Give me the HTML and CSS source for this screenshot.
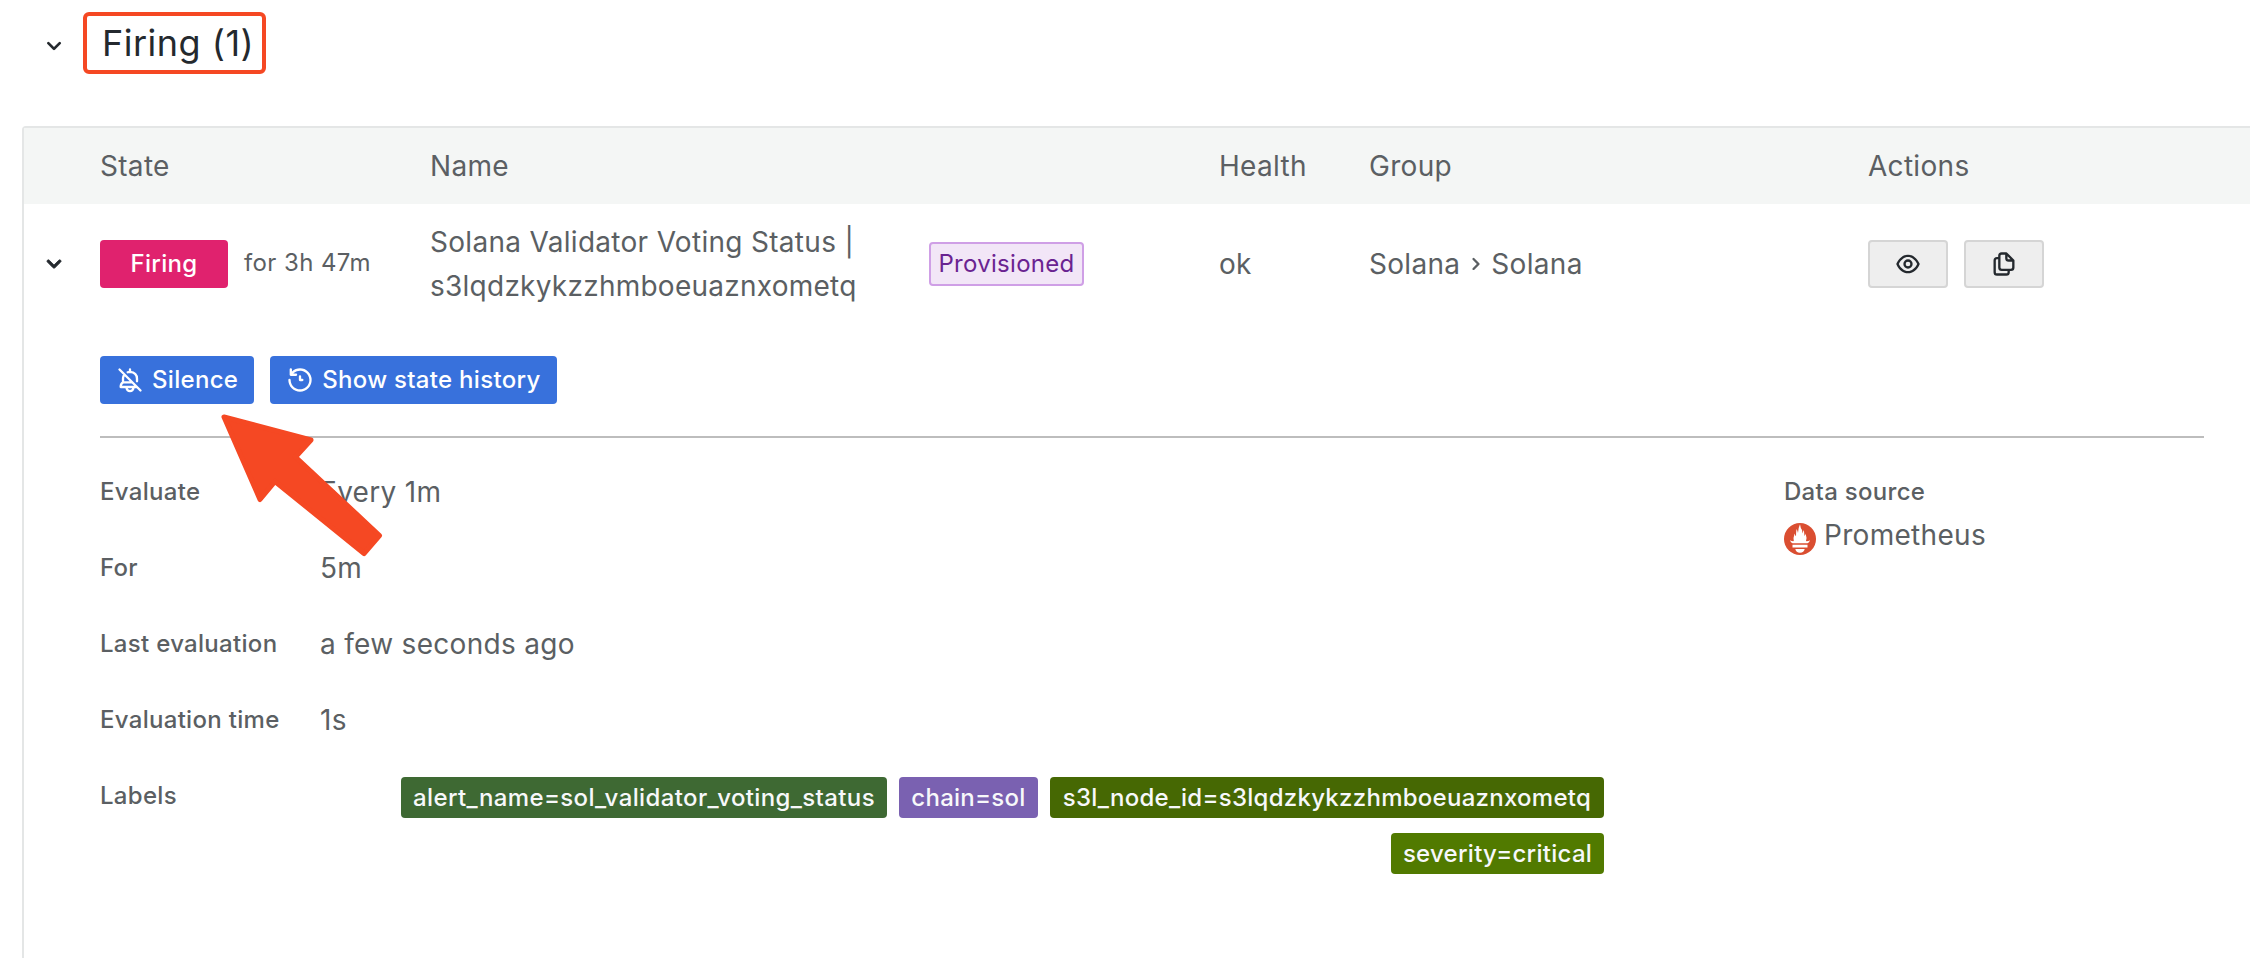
FILE: index.html
```html
<!DOCTYPE html>
<html lang="en">
<head>
<meta charset="utf-8">
<title>Alert rules</title>
<link rel="stylesheet" href="styles.css">
</head>
<body>
<svg class="sprite" width="0" height="0">
  <symbol id="angle-down" viewBox="0 0 24 24"><path d="M17,9.17a1,1,0,0,0-1.41,0L12,12.71,8.46,9.17a1,1,0,0,0-1.41,0,1,1,0,0,0,0,1.42l4.24,4.24a1,1,0,0,0,1.42,0L17,10.59A1,1,0,0,0,17,9.17Z"/></symbol>
</svg>
<header class="section-header">
  <svg class="icon toggle"><use href="#angle-down"/></svg>
  <h4 class="section-title">Firing (1)</h4>
</header>

<main class="table">
  <div class="grid head">
    <span></span><span>State</span><span>Name</span><span></span><span>Health</span><span>Group</span><span>Actions</span>
  </div>
  <div class="grid row">
    <svg class="icon row-toggle"><use href="#angle-down"/></svg>
    <div class="state"><span class="state-tag">Firing</span><span class="small">for 3h 47m</span></div>
    <div><span>Solana Validator Voting Status |</span><br><span class="name-id">s3lqdzkykzzhmboeuaznxometq</span></div>
    <div class="cell"><span class="provisioned">Provisioned</span></div>
    <div>ok</div>
    <div class="group">Solana<svg class="icon sep" viewBox="0 0 24 24"><path d="M14.83,11.29,10.59,7.05a1,1,0,0,0-1.42,0,1,1,0,0,0,0,1.41L12.71,12,9.17,15.54a1,1,0,0,0,0,1.41,1,1,0,0,0,.71.29,1,1,0,0,0,.71-.29l4.24-4.24A1,1,0,0,0,14.83,11.29Z"/></svg>Solana</div>
    <div class="actions">
      <button class="icon-button" aria-label="View"><svg class="icon" viewBox="0 0 24 24"><path d="M21.92,11.6C19.9,6.91,16.1,4,12,4S4.1,6.91,2.08,11.6a1,1,0,0,0,0,.8C4.1,17.09,7.9,20,12,20s7.9-2.91,9.92-7.6A1,1,0,0,0,21.92,11.6ZM12,18c-3.17,0-6.17-2.29-7.9-6C5.83,8.29,8.83,6,12,6s6.17,2.29,7.9,6C18.17,15.71,15.17,18,12,18ZM12,8a4,4,0,1,0,4,4A4,4,0,0,0,12,8Zm0,6a2,2,0,1,1,2-2A2,2,0,0,1,12,14Z"/></svg></button>
      <button class="icon-button" aria-label="Copy"><svg class="icon" viewBox="0 0 24 24"><path d="M21,8.94a1.31,1.31,0,0,0-.06-.27l0-.09a1.07,1.07,0,0,0-.19-.28h0l-6-6h0a1.07,1.07,0,0,0-.28-.19.32.32,0,0,0-.09,0A.88.88,0,0,0,14.05,2H10A3,3,0,0,0,7,5V6H6A3,3,0,0,0,3,9V19a3,3,0,0,0,3,3h8a3,3,0,0,0,3-3V18h1a3,3,0,0,0,3-3V9S21,9,21,8.94ZM15,5.41,17.59,8H16a1,1,0,0,1-1-1ZM15,19a1,1,0,0,1-1,1H6a1,1,0,0,1-1-1V9A1,1,0,0,1,6,8H7v7a3,3,0,0,0,3,3h5Zm4-4a1,1,0,0,1-1,1H10a1,1,0,0,1-1-1V5a1,1,0,0,1,1-1h3V7a3,3,0,0,0,3,3h3Z"/></svg></button>
    </div>
  </div>

  <section class="expanded">
    <div class="toolbar">
      <button class="button"><svg class="icon" viewBox="0 0 24 24"><g fill="none" stroke="currentColor" stroke-width="2" stroke-linecap="round" stroke-linejoin="round"><path d="M3 3l18 18M6.500 8.500Q6 9.800 6 11v3Q4 15 4 18H17.500M6 14h7.500M9 18.500a3 3 0 0 0 6 0M12 3v2Q18 5.500 18 11v2M10 5.400Q10.900 5 12 5"/></g></svg>Silence</button>
      <button class="button"><svg class="icon" viewBox="0 0 24 24"><path d="M12,2A10,10,0,0,0,5.12,4.77V3a1,1,0,0,0-2,0V7.5a1,1,0,0,0,1,1H8.62a1,1,0,0,0,0-2H6.22A8,8,0,1,1,4,12a1,1,0,0,0-2,0A10,10,0,1,0,12,2Zm0,6a1,1,0,0,0-1,1v3a1,1,0,0,0,1,1h2a1,1,0,0,0,0-2H13V9A1,1,0,0,0,12,8Z"/></svg>Show state history</button>
    </div>
    <div class="details">
      <dl class="fields">
        <dt>Evaluate</dt><dd>Every 1m</dd>
        <dt>For</dt><dd>5m</dd>
        <dt>Last evaluation</dt><dd>a few seconds ago</dd>
        <dt>Evaluation time</dt><dd>1s</dd>
        <dt>Labels</dt>
        <dd class="tags">
          <span class="tag green">alert_name=sol_validator_voting_status</span>
          <span class="tag purple">chain=sol</span>
          <span class="tag olive">s3l_node_id=s3lqdzkykzzhmboeuaznxometq</span>
          <span class="tag lime">severity=critical</span>
        </dd>
      </dl>
      <dl class="source">
        <dt>Data source</dt>
        <dd><svg class="prometheus" viewBox="0 0 32 32"><circle cx="16" cy="16" r="16" fill="#da4e31"/><path fill="#fff" d="M6 17.300q2 1 3.800.8Q9 15 10.600 10.500q.5 2 1.400 2.700Q12 9 12.500 6q1 1.500 1.500 4 .3-5.500 2-8.800.5 4 2 5.800.4 2 .4 3.500.8-2.500 1.500-3.500.3 3 .6 6 1-1.500 1.100-2.600Q23.200 15 22 18.100q2 .2 4-.8-.7 2.300-2.500 3h-15Q6.700 19.600 6 17.300ZM8.500 21.700h15v2.800h-15ZM11.300 26h9.400q-.7 3.700-4.700 3.700T11.300 26Z"/></svg>Prometheus</dd>
      </dl>
    </div>
    <svg class="arrow" viewBox="0 0 170 150"><path d="M6 8L93 31 77.500 48 161.500 126.500 146 144.500 57 72.500 42 90.500Z" fill="#f54823" stroke="#f54823" stroke-width="5" stroke-linejoin="round"/></svg>
  </section>
</main>
</body>
</html>
```
FILE: styles.css
```css
* { box-sizing: border-box; }

body {
  margin: 0;
  height: 958px;
  overflow: hidden;
  display: flex;
  flex-direction: column;
  background: #fff;
  color: #5b5f63;
  font: 400 28px/44px Inter, "Liberation Sans", sans-serif;
  letter-spacing: 0.3px;
}

.sprite { position: absolute; }

.icon {
  width: 28px;
  height: 28px;
  flex: none;
  fill: currentColor;
}

.section-header {
  display: flex;
  align-items: center;
  height: 86px;
  padding-left: 38px;
  color: #24292e;
}

.toggle { width: 32px; height: 32px; margin-top: 6px; }

.section-title {
  margin: 0 0 0 13px;
  width: 183px;
  height: 62px;
  padding-left: 15px;
  border: 4px solid #f54823;
  border-radius: 6px;
  font-size: 36px;
  font-weight: 400;
  line-height: 54px;
  letter-spacing: 0.5px;
}

.table {
  flex: 1;
  margin: 40px 0 0 22px;
  border: 2px solid #e4e6e6;
  border-width: 2px 0 0 2px;
  border-top-left-radius: 4px;
}

.grid {
  display: grid;
  grid-template-columns: 76px 330px 499px 290px 150px 499px 1fr;
  align-items: center;
}

.head { height: 76px; background: #f4f6f5; }
.row { height: 120px; }
.name-id { letter-spacing: 0.25px; }

.row-toggle {
  width: 32px;
  height: 32px;
  margin-left: 14px;
  color: #24292e;
  stroke: currentColor;
  stroke-width: 0.6;
}

.state, .group, .actions, .toolbar { display: flex; align-items: center; }
.state { gap: 16px; }
.small { font-size: 24px; line-height: 36px; margin-top: -3px; letter-spacing: 0.4px; }

.state-tag {
  width: 128px;
  height: 48px;
  border-radius: 4px;
  background: #e0226e;
  color: #fff;
  font-size: 24px;
  font-weight: 550;
  line-height: 48px;
  text-align: center;
}

.cell { display: flex; }

.provisioned {
  width: 155px;
  height: 44px;
  border: 2px solid #cf9fe6;
  border-radius: 4px;
  background: #f2e6f7;
  color: #6a2391;
  font-size: 24px;
  line-height: 40px;
  text-align: center;
}

.sep { margin: 0 1px 0 2px; }
.actions { gap: 16px; }

.icon-button {
  display: flex;
  align-items: center;
  justify-content: center;
  width: 80px;
  height: 48px;
  padding: 0;
  border: 2px solid #d5d5d5;
  border-radius: 4px;
  background: #eee;
  color: #24292e;
}

.expanded {
  position: relative;
  padding: 32px 46px 0 76px;
}

.toolbar {
  gap: 16px;
  padding-bottom: 32px;
  border-bottom: 2px solid #bdbdbd;
}

.button {
  display: flex;
  align-items: center;
  gap: 8px;
  height: 48px;
  padding: 0 16px;
  border: 0;
  border-radius: 4px;
  background: #3871dc;
  color: #fff;
  font: 550 24px/48px Inter, "Liberation Sans", sans-serif;
  letter-spacing: 0.3px;
}

.details { display: flex; padding-top: 32px; }
dl, dd { margin: 0; }

dt {
  padding-top: 4px;
  font-size: 24px;
  font-weight: 500;
  line-height: 36px;
}

.fields {
  display: grid;
  grid-template-columns: 220px 1284px;
  row-gap: 32px;
  width: 1684px;
}

.tags {
  display: flex;
  flex-wrap: wrap;
  justify-content: flex-end;
  gap: 15px 12px;
  padding-top: 3px;
}

.tag {
  height: 41px;
  border-radius: 4px;
  color: #f7f8fa;
  font-size: 24px;
  font-weight: 550;
  line-height: 41px;
  letter-spacing: 0.27px;
  text-align: center;
  white-space: nowrap;
}

.green { width: 486px; background: #3e6933; letter-spacing: 0.38px; }
.purple { width: 139px; background: #7a61b1; }
.olive { width: 554px; background: #466803; }
.lime { width: 213px; background: #517a00; }

.source dd { display: flex; gap: 8px; align-items: center; margin-top: 3px; }
.prometheus { width: 32px; height: 32px; margin-top: 7px; }

.arrow {
  position: absolute;
  left: 194px;
  top: 85px;
  width: 170px;
  height: 150px;
}
```
